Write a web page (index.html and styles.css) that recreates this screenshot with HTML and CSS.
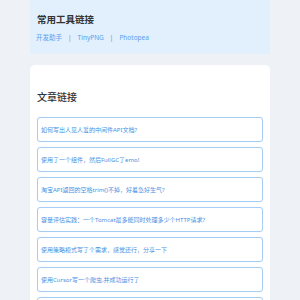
FILE: index.html
```html
<!DOCTYPE html>
<html lang="zh-CN">
<head>
<meta charset="utf-8">
<link rel="stylesheet" href="styles.css">
</head>
<body>
<div class="page">
  <section class="tools">
    <h2 class="tools-title">常用工具链接</h2>
    <nav class="tools-links">
      <a class="tool">开发助手</a><span class="sep">|</span>
      <a class="tool">TinyPNG</a><span class="sep">|</span>
      <a class="tool">Photopea</a>
    </nav>
  </section>
  <section class="articles">
    <h2 class="articles-title">文章链接</h2>
    <ul class="article-list">
      <li class="article">如何写出人见人爱的中间件API文档?</li>
      <li class="article">使用了一个组件，然后FullGC了emo!</li>
      <li class="article">淘宝API返回的空格trim()不掉，好着急好生气?</li>
      <li class="article">容量评估实践：一个Tomcat最多能同时处理多少个HTTP请求?</li>
      <li class="article">使用策略模式写了个需求，感觉还行，分享一下</li>
      <li class="article">使用Cursor写一个爬虫,并成功运行了</li>
      <li class="article"></li>
    </ul>
  </section>
</div>
</body>
</html>
```

FILE: styles.css
```css
html, body {
  margin: 0;
  padding: 0;
  background: #eef2f7;
  font-family: "Noto Sans", "Noto Sans CJK SC", sans-serif;
  height: 300px;
  overflow: hidden;
}
.page {
  width: 240px;
  margin: 0 auto;
}
.tools {
  background: #e1f0fc;
  height: 54px;
  box-sizing: border-box;
  padding: 12px 7px 0 6px;
}
.tools-title {
  margin: 0 0 0 1px;
  font-size: 9.5px;
  line-height: 16px;
  font-weight: 700;
  color: #333;
}
.tools-links {
  margin-top: 4px;
  display: flex;
  align-items: center;
  gap: 6px;
  font-size: 6.5px;
  line-height: 12px;
}
.tool {
  color: #5a9ef0;
}
.sep {
  color: #8a8f96;
}
.articles {
  margin-top: 11px;
  background: #fff;
  border-radius: 5px;
  padding: 22px 7px 0 7px;
  height: 300px;
}
.articles-title {
  margin: 0 0 10px 0;
  font-size: 10px;
  line-height: 20px;
  font-weight: 500;
  color: #333;
}
.article-list {
  list-style: none;
  margin: 0;
  padding: 0;
  display: flex;
  flex-direction: column;
  gap: 5px;
}
.article {
  height: 25px;
  box-sizing: border-box;
  border: 1px solid #a6cef5;
  border-radius: 3px;
  box-shadow: 0 0 1px #cfe4fa;
  display: flex;
  align-items: center;
  padding-left: 3px;
  font-size: 6px;
  color: #4a8fe2;
}
```
